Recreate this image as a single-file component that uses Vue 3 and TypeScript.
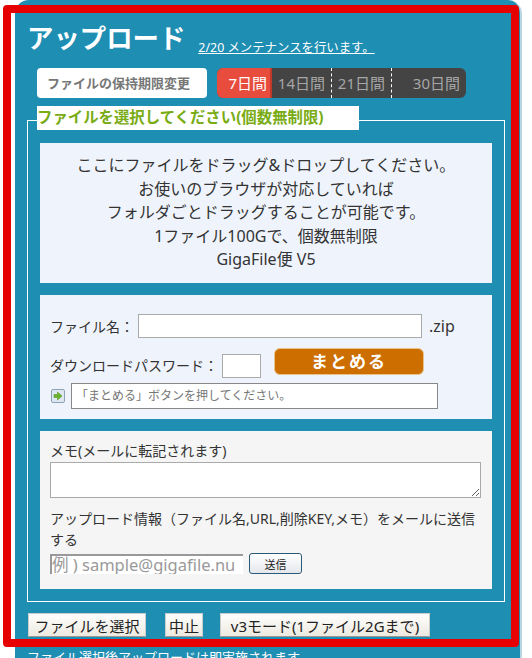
<script setup lang="ts">
const periods = [
  { label: '7日間', cls: 'on' },
  { label: '14日間', cls: 'p14' },
  { label: '21日間', cls: 'p21' },
  { label: '30日間', cls: 'p30' }
]
const dropLines = [
  'ここにファイルをドラッグ&ドロップしてください。',
  'お使いのブラウザが対応していれば',
  'フォルダごとドラッグすることが可能です。',
  '1ファイル100Gで、個数無制限',
  'GigaFile便 V5'
]
</script>

<template>
  <div class="page">
    <div class="panel">
      <div class="head">
        <h1>アップロード</h1>
        <a class="news">2/20 メンテナンスを行います。</a>
      </div>

      <div class="period-row">
        <div class="period-label">ファイルの保持期限変更</div>
        <div class="periods">
          <div v-for="p in periods" :key="p.label" class="period" :class="p.cls">{{ p.label }}</div>
        </div>
      </div>

      <div class="box">
        <div class="legend">ファイルを選択してください(個数無制限)</div>

        <div class="drop">
          <p v-for="line in dropLines" :key="line">{{ line }}</p>
        </div>

        <div class="zip">
          <div class="zip-row">
            <label>ファイル名：</label>
            <input class="name" type="text" />
            <span class="ext">.zip</span>
          </div>
          <div class="pass-row">
            <label>ダウンロードパスワード：</label>
            <input class="pass" type="text" />
            <div class="matome">まとめる</div>
          </div>
          <div class="hint-row">
            <svg class="arrow" width="14" height="14" viewBox="0 0 14 14">
              <rect x="0.5" y="0.5" width="13" height="13" rx="1.5" fill="#dfe8f2" stroke="#8fa3b8" />
              <path d="M3 5.5h3.5V3L11 7l-4.5 4V8.5H3z" fill="#6db52d" stroke="#4d8a1a" stroke-width="0.5" />
            </svg>
            <div class="hint">「まとめる」ボタンを押してください。</div>
          </div>
        </div>

        <div class="memo">
          <div class="memo-title">メモ(メールに転記されます)</div>
          <textarea class="memo-area"></textarea>
          <div class="memo-note">アップロード情報（ファイル名,URL,削除KEY,メモ）をメールに送信する</div>
          <div class="mail-row">
            <input class="mail" type="text" placeholder="例 ) sample@gigafile.nu" />
            <button class="send">送信</button>
          </div>
        </div>
      </div>

      <div class="actions">
        <button class="act select">ファイルを選択</button>
        <button class="act stop">中止</button>
        <button class="act v3">v3モード(1ファイル2Gまで)</button>
      </div>
      <div class="after">ファイル選択後アップロードは即実施されます</div>
    </div>
    <!-- 赤枠は画面の上に重ねる -->
    <div class="red-frame"></div>
  </div>
</template>

<style>
html, body {
  margin: 0;
  background: #fff;
  overflow: hidden;
}
</style>

<style scoped>
.page {
  position: relative;
  width: 532px;
  height: 658px;
  overflow: hidden;
  font-family: "Noto Sans", "Noto Sans CJK JP", sans-serif;
  color: #333;
}
.red-frame {
  position: absolute;
  left: 3px;
  top: 5px;
  width: 516px;
  height: 642px;
  box-sizing: border-box;
  border: 8px solid #e60000;
  border-radius: 4px;
  pointer-events: none;
}
.panel {
  width: 507px;
  height: 700px;
  margin-left: 15px;
  box-sizing: border-box;
  background: #1f8eb3;
  border-radius: 14px 14px 0 0;
  border-right: 2px solid #b9d6e3;
  padding: 20px 0 0 12px;
}
.head {
  display: flex;
  align-items: flex-end;
  height: 36px;
}
h1 {
  margin: 0;
  font-size: 26.4px;
  line-height: 36px;
  font-weight: bold;
  color: #fff;
}
.news {
  margin-left: 13px;
  font-size: 12.4px;
  line-height: 16px;
  color: #fff;
  text-decoration: underline;
  white-space: nowrap;
}
.period-row {
  display: flex;
  margin: 12px 0 0 10px;
  height: 30px;
}
.period-label {
  width: 170px;
  height: 30px;
  box-sizing: border-box;
  padding-left: 10px;
  line-height: 30px;
  background: #fff;
  border-radius: 4px;
  font-size: 13px;
  font-weight: bold;
  color: #777;
  white-space: nowrap;
}
.periods {
  display: flex;
  margin-left: 10px;
  width: 249px;
  height: 30px;
  background: #444;
  border-radius: 6px;
  overflow: hidden;
  font-size: 15px;
  line-height: 30px;
  color: #a6a6a6;
}
.period {
  box-sizing: border-box;
  text-align: right;
  padding-right: 6px;
  white-space: nowrap;
}
.on {
  width: 55px;
  padding-right: 3px;
  background: #e74c3c;
  border-right: 2px solid #c0392b;
  color: #fff;
}
.p14 {
  width: 60px;
  border-right: 1px dashed #fff;
}
.p21 {
  width: 60px;
  border-right: 1px dashed #fff;
}
.p30 {
  width: 74px;
}
.box {
  position: relative;
  box-sizing: border-box;
  width: 478px;
  height: 482px;
  margin-top: 22px;
  border: 1px solid #fff;
  padding: 22px 12px 0;
}
.legend {
  position: absolute;
  left: 9px;
  top: -15px;
  width: 322px;
  height: 24px;
  background: #fff;
  font-size: 15.4px;
  line-height: 23px;
  font-weight: bold;
  color: #79ac14;
  white-space: nowrap;
}
.drop {
  height: 140px;
  box-sizing: border-box;
  background: #eff4fc;
  padding-top: 11px;
  text-align: center;
  font-size: 16px;
  line-height: 23.6px;
}
.drop p {
  margin: 0;
}
.zip {
  height: 124px;
  box-sizing: border-box;
  margin-top: 12px;
  background: #eff4fc;
  padding: 19px 10px 0;
  font-size: 14px;
}
.zip-row {
  display: flex;
  align-items: center;
  height: 24px;
}
.zip-row label {
  width: 88px;
}
input, textarea {
  box-sizing: border-box;
  background: #fff;
  border: 1px solid #aaa;
  margin: 0;
  padding: 0;
}
.name {
  width: 284px;
  height: 24px;
}
.ext {
  margin-left: 7px;
  font-size: 16px;
}
.pass-row {
  display: flex;
  height: 30px;
  margin-top: 10px;
}
.pass-row label {
  width: 172px;
  margin-top: 6px;
  line-height: 24px;
}
.pass {
  width: 39px;
  height: 24px;
  margin-top: 6px;
}
.matome {
  width: 150px;
  height: 27px;
  margin-left: 13px;
  background: #cc6e00;
  border: 1px solid #e8c48a;
  box-sizing: border-box;
  border-radius: 6px;
  text-align: center;
  color: #fff;
  font-size: 17px;
  line-height: 25px;
  font-weight: bold;
  letter-spacing: 2px;
}
.hint-row {
  display: flex;
  align-items: center;
  margin-top: 5px;
}
.arrow {
  margin-left: 1px;
}
.hint {
  box-sizing: border-box;
  width: 367px;
  height: 26px;
  margin-left: 6px;
  border: 1px solid #888;
  background: #fff;
  padding-left: 4px;
  font-size: 12px;
  line-height: 24px;
  color: #777;
}
.memo {
  height: 158px;
  box-sizing: border-box;
  margin-top: 12px;
  background: #f5f5f5;
  padding: 11px 10px 0;
  font-size: 14px;
}
.memo-title {
  line-height: 18px;
}
.memo-area {
  display: block;
  width: 431px;
  height: 36px;
  margin-top: 2px;
  resize: both;
}
.memo-note {
  margin-top: 10px;
  line-height: 21px;
}
.mail-row {
  display: flex;
  align-items: center;
  margin-top: 3px;
}
.mail {
  width: 193px;
  height: 20px;
  border: none;
  border-top: 2px solid #999;
  border-left: 2px solid #999;
  font-family: inherit;
  font-size: 16.5px;
}
.mail::placeholder {
  color: #999;
}
.send {
  width: 53px;
  height: 21px;
  margin-left: 6px;
  border: 1px solid #2a5a7a;
  border-radius: 3px;
  background: linear-gradient(#fff, #e4e8ec);
  font-family: inherit;
  font-size: 11px;
  padding: 0;
  color: #222;
}
.actions {
  display: flex;
  margin: 11px 0 0 1px;
}
.act {
  height: 24px;
  padding: 0;
  border: 1px solid #ccc;
  border-bottom-color: #999;
  background: linear-gradient(#fff, #ece9df);
  font-family: inherit;
  font-size: 15px;
  color: #222;
  white-space: nowrap;
}
.select {
  width: 118px;
}
.stop {
  width: 38px;
  margin-left: 19px;
}
.v3 {
  width: 210px;
  margin-left: 17px;
}
.after {
  margin-top: 10px;
  font-size: 13px;
  line-height: 20px;
  color: #fff;
  white-space: nowrap;
}
</style>
